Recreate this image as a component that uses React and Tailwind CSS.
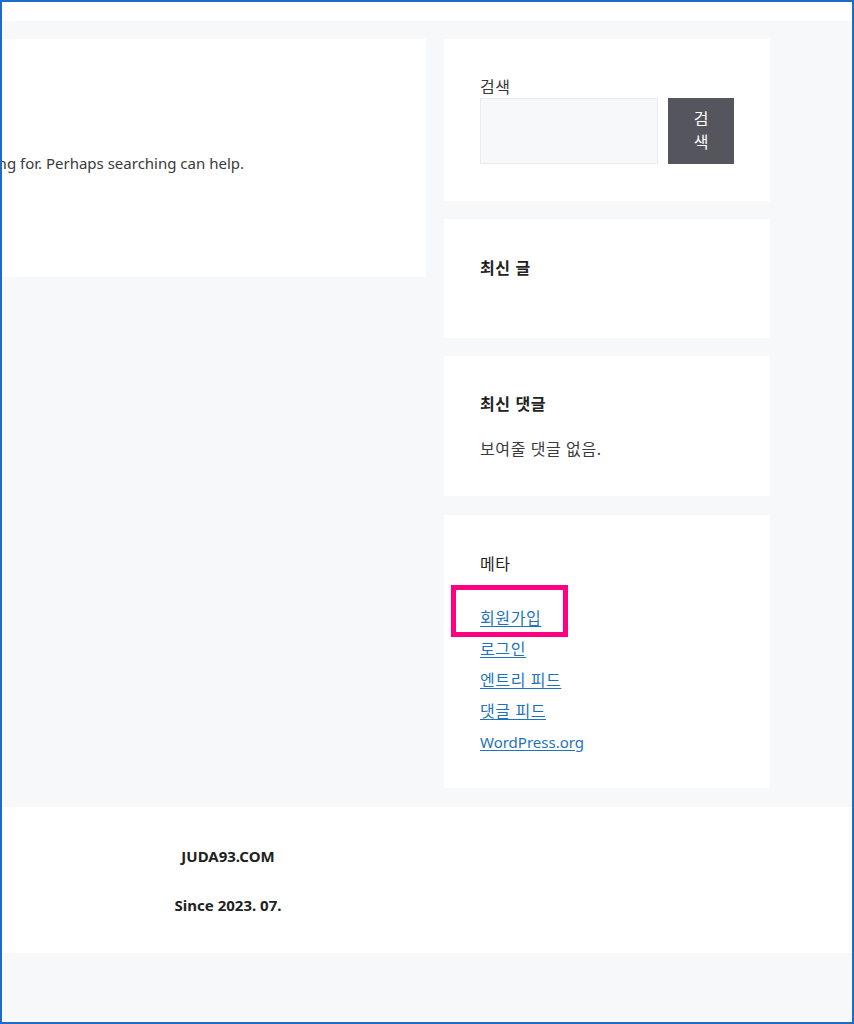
export default function App() {
  const font = { fontFamily: '"Noto Sans", "Noto Sans CJK KR", sans-serif' };
  const links = ['회원가입', '로그인', '엔트리 피드', '댓글 피드'];
  return (
    <div className="w-[854px] h-[1024px] border-2 border-[#1d6cc8] bg-[#f7f8f9] overflow-hidden flex flex-col text-[15px] text-[#3a3a3a]" style={font}>
      <div className="h-[19px] bg-white shrink-0" />

      <div className="flex gap-[18px] pt-[18px] pb-[19px] shrink-0">
        <div className="w-[424px] h-[238px] bg-white shrink-0 pt-[114px]">
          <div className="w-[242px] flex justify-end overflow-hidden whitespace-nowrap leading-[20px]">
            <span>It seems we can’t find what you’re looking for. Perhaps searching can help.</span>
          </div>
        </div>

        <div className="w-[326px] flex flex-col gap-[18px] shrink-0">
          <div className="h-[162px] bg-white pl-[36px] pt-[38px]">
            <div className="leading-[20px] text-[16px] tracking-[0.6px]">검색</div>
            <div className="flex gap-[10px] mt-[1px]">
              <div className="w-[178px] h-[66px] bg-[#f7f8f9] border border-[#ececec]" />
              <button className="w-[66px] h-[66px] bg-[#55555e] text-white text-[16px] leading-[23px] px-[24px] break-all">
                검색
              </button>
            </div>
          </div>

          <div className="h-[119px] bg-white pl-[36px] pt-[39px]">
            <div className="font-bold text-[#222] text-[16px] tracking-[0.6px] leading-[20px]">최신 글</div>
          </div>

          <div className="h-[140px] bg-white pl-[36px] pt-[38px]">
            <div className="font-bold text-[#222] text-[16px] tracking-[0.6px] leading-[20px]">최신 댓글</div>
            <div className="leading-[20px] text-[16px] tracking-[0.6px] mt-[25px]">보여줄 댓글 없음.</div>
          </div>

          <div className="h-[273px] bg-white pl-[36px] pt-[39px] mt-[1px] relative">
            <div className="leading-[20px] text-[16px] tracking-[0.6px] text-[#222]">메타</div>
            <ul className="mt-[34px] flex flex-col gap-[11px]">
              {links.map((l) => (
                <li key={l} className="leading-[20px] text-[16px] tracking-[0.6px]">
                  <a href="#" className="text-[#1e73be] underline underline-offset-2">{l}</a>
                </li>
              ))}
              <li className="leading-[20px]">
                <a href="#" className="text-[#1e73be] underline underline-offset-2">WordPress.org</a>
              </li>
            </ul>
            <div className="absolute left-[7px] top-[70px] w-[117px] h-[52px] border-[5px] border-[#ff0080]" />
          </div>
        </div>
      </div>

      <div className="h-[146px] bg-white shrink-0 w-full">
        <div className="w-[452px] flex flex-col items-center font-bold text-[15px] text-[#222] pt-[39px]">
          <div className="leading-[20px]">JUDA93.COM</div>
          <div className="leading-[20px] mt-[29px]">Since 2023. 07.</div>
        </div>
      </div>
      <div className="flex-1" />
    </div>
  );
}
